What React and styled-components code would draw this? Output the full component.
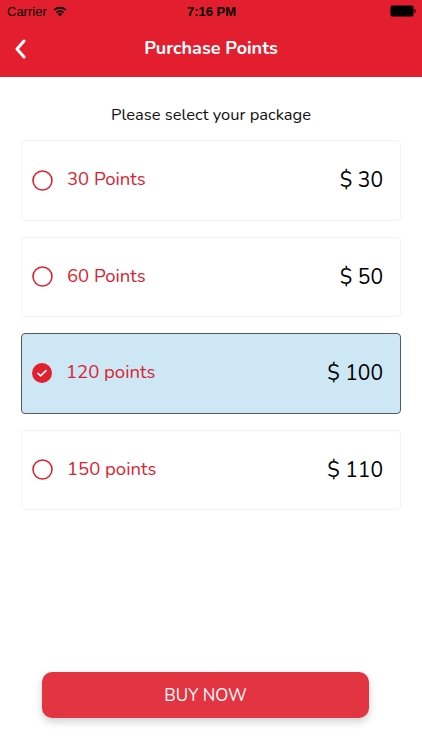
import React, { useState } from "react";
import styled, { createGlobalStyle } from "styled-components";

const GlobalStyle = createGlobalStyle`
  html, body {
    margin: 0;
    padding: 0;
    background: #ffffff;
  }
  body {
    font-family: "Nunito", Lato, "Open Sans", sans-serif;
  }
  * {
    box-sizing: border-box;
  }
`;

const packages = [
  { id: 1, label: "30 Points", price: "$ 30" },
  { id: 2, label: "60 Points", price: "$ 50" },
  { id: 3, label: "120 points", price: "$ 100" },
  { id: 4, label: "150 points", price: "$ 110" }
];

const App = () => {
  const [selected, setSelected] = useState(3);
  return (
    <Page>
      <GlobalStyle />
      <Header>
        <StatusBar>
          <Carrier>
            Carrier
            <svg width="16" height="12" viewBox="0 0 16 12">
              <path d="M8 11.5l2.2-2.6a3.4 3.4 0 0 0-4.4 0z" fill="#000" />
              <path d="M3.9 6.9a6.2 6.2 0 0 1 8.2 0l-1.2 1.4a4.4 4.4 0 0 0-5.8 0z" fill="#000" />
              <path d="M1.6 4.2a9.7 9.7 0 0 1 12.8 0l-1.2 1.4a7.9 7.9 0 0 0-10.4 0z" fill="#000" />
            </svg>
          </Carrier>
          <Clock>7:16 PM</Clock>
          <Battery>
            <BatteryBody />
            <BatteryCap />
          </Battery>
        </StatusBar>
        <NavBar>
          <BackButton>
            <svg width="14" height="22" viewBox="0 0 14 22">
              <path d="M11 3L4 11l7 8" fill="none" stroke="#fff" strokeWidth="3" strokeLinecap="round" strokeLinejoin="round" />
            </svg>
          </BackButton>
          <Title>Purchase Points</Title>
        </NavBar>
      </Header>

      <Content>
        <Prompt>Please select your package</Prompt>
        <List>
          {packages.map(p => (
            <Card key={p.id} active={selected === p.id} onClick={() => setSelected(p.id)}>
              <Left>
                {selected === p.id ? (
                  <svg width="20" height="20" viewBox="0 0 20 20">
                    <circle cx="10" cy="10" r="10" fill="#e21f2f" />
                    <path d="M6 10.3l2.6 2.5L14 7.6" fill="none" stroke="#fff" strokeWidth="1.6" strokeLinecap="round" strokeLinejoin="round" />
                  </svg>
                ) : (
                  <svg width="21" height="21" viewBox="0 0 21 21">
                    <circle cx="10.5" cy="10.5" r="9.5" fill="none" stroke="#d8232f" strokeWidth="1.6" />
                  </svg>
                )}
                <Label>{p.label}</Label>
              </Left>
              <Price>{p.price}</Price>
            </Card>
          ))}
        </List>
      </Content>

      <Footer>
        <BuyButton>BUY NOW</BuyButton>
      </Footer>
    </Page>
  );
};

const Page = styled.div`
  width: 422px;
  height: 750px;
  display: flex;
  flex-direction: column;
  background: #ffffff;
`;

const Header = styled.div`
  background: #e31f2f;
  height: 77px;
  display: flex;
  flex-direction: column;
`;

const StatusBar = styled.div`
  height: 22px;
  display: flex;
  align-items: center;
  justify-content: space-between;
  padding: 0 6px 0 7px;
  font-family: "Liberation Sans", Arial, sans-serif;
  font-size: 13px;
  color: #000;
`;

const Carrier = styled.div`
  display: flex;
  align-items: center;
  gap: 5px;
  width: 90px;
`;

const Clock = styled.div`
  font-weight: bold;
`;

const Battery = styled.div`
  width: 90px;
  display: flex;
  justify-content: flex-end;
  align-items: center;
`;

const BatteryBody = styled.div`
  width: 22px;
  height: 10px;
  border-radius: 2px;
  background: #000;
  box-shadow: 0 0 0 1px rgba(0, 0, 0, 0.5);
`;

const BatteryCap = styled.div`
  width: 2px;
  height: 4px;
  margin-left: 1px;
  background: rgba(0, 0, 0, 0.5);
  border-radius: 0 1px 1px 0;
`;

const NavBar = styled.div`
  flex: 1;
  display: flex;
  align-items: center;
  justify-content: center;
  position: relative;
`;

const BackButton = styled.div`
  position: absolute;
  left: 13px;
  top: 16px;
  display: flex;
`;

const Title = styled.div`
  color: #ffffff;
  font-size: 18px;
  font-weight: 700;
  margin-top: -4px;
`;

const Content = styled.div`
  flex: 1;
  display: flex;
  flex-direction: column;
  padding: 26px 21px 0;
`;

const Prompt = styled.div`
  text-align: center;
  font-size: 16.5px;
  color: #111;
  margin-bottom: 14px;
`;

const List = styled.div`
  display: flex;
  flex-direction: column;
  gap: 16px;
`;

const Card = styled.div`
  height: 80.5px;
  display: flex;
  align-items: center;
  justify-content: space-between;
  padding: 0 17px 0 10px;
  border-radius: 4px;
  border: 1px solid ${p => (p.active ? "#555a5e" : "#f3f3f3")};
  background: ${p => (p.active ? "#cde7f4" : "#ffffff")};
  cursor: pointer;
`;

const Left = styled.div`
  display: flex;
  align-items: center;
  gap: 14px;
`;

const Label = styled.span`
  color: #d8232f;
  font-size: 18.5px;
  margin-top: -2px;
`;

const Price = styled.span`
  color: #000;
  font-size: 21px;
`;

const Footer = styled.div`
  padding: 0 53px 32px 42px;
`;

const BuyButton = styled.button`
  width: 100%;
  height: 46px;
  border: none;
  border-radius: 10px;
  background: #e33442;
  color: #fff;
  font-family: "Nunito", Lato, "Open Sans", sans-serif;
  font-size: 17px;
  box-shadow: 0 4px 8px rgba(0, 0, 0, 0.18);
`;

export default App;
